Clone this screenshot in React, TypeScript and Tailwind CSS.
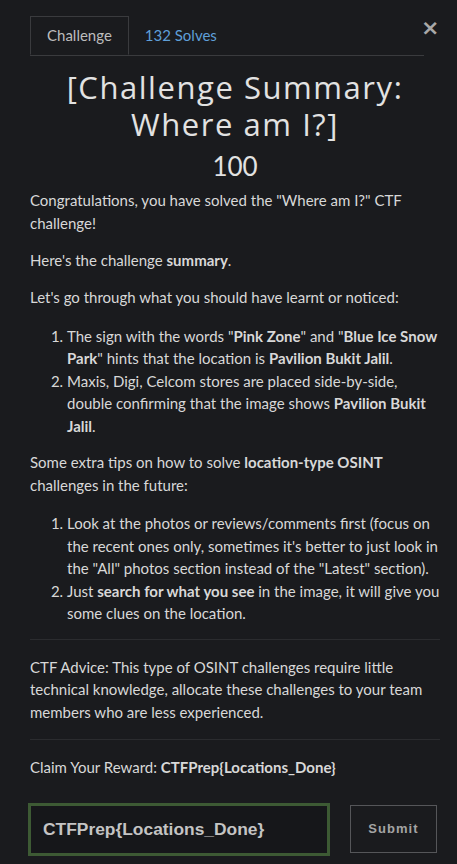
import { useState } from "react";

const body = { fontFamily: "Lato, 'Noto Sans', sans-serif" };

export default function App() {
    const [flag, setFlag] = useState("CTFPrep{Locations_Done}");

    return (
        <div className="relative w-[457px] h-[864px] overflow-hidden bg-[#1a1b1e] text-[#d8d8d8]" style={body}>
            {/* Close */}
            <button className="absolute left-[421px] top-[17px] text-[22px] leading-none font-bold text-[#a8a8a8]" style={{ fontFamily: "'DejaVu Sans', sans-serif" }}>
                ×
            </button>

            <div className="pl-[30px] pr-[17px] pt-[16px]">
                {/* Tabs */}
                <div className="flex w-[394px] border-b border-[#3a3b3e] text-[15px]">
                    <div className="-mb-px h-[39px] flex items-center px-4 border border-[#3a3b3e] border-b-[#1a1b1e] text-[#bdbdbd]">
                        Challenge
                    </div>
                    <div className="h-[39px] flex items-center px-4 text-[#5f9fd8]">132 Solves</div>
                </div>

                {/* Title */}
                <h2
                    className="mt-[13px] text-center text-[31px] leading-[37px] tracking-[0.05em] text-[#e2e2e2]"
                    style={{ fontFamily: "'Open Sans', sans-serif" }}
                >
                    [Challenge Summary:
                    <br />
                    Where am I?]
                </h2>
                <div className="mt-[6px] text-center text-[26px] leading-[34px] text-[#e2e2e2]">100</div>

                {/* Description */}
                <div className="mt-[6px] text-[15px] leading-[22.5px]">
                    <p className="mb-[14.5px]">Congratulations, you have solved the "Where am I?" CTF challenge!</p>
                    <p className="mb-[14.5px]">
                        Here's the challenge <b>summary</b>.
                    </p>
                    <p className="mb-[16.5px]">Let's go through what you should have learnt or noticed:</p>
                    <ol className="list-decimal pl-[37px] mb-[14px]">
                        <li>
                            The sign with the words "<b>Pink Zone</b>" and "<b>Blue Ice Snow Park</b>" hints that the location is{" "}
                            <b>Pavilion Bukit Jalil</b>.
                        </li>
                        <li>
                            Maxis, Digi, Celcom stores are placed side-by-side, double confirming that the image shows{" "}
                            <b>Pavilion Bukit Jalil</b>.
                        </li>
                    </ol>
                    <p className="mb-[16px]">
                        Some extra tips on how to solve <b>location-type OSINT</b> challenges in the future:
                    </p>
                    <ol className="list-decimal pl-[37px]">
                        <li>
                            Look at the photos or reviews/comments first (focus on the recent ones only, sometimes it's better to just
                            look in the "All" photos section instead of the "Latest" section).
                        </li>
                        <li>
                            Just <b>search for what you see</b> in the image, it will give you some clues on the location.
                        </li>
                    </ol>
                    <hr className="mt-[14px] mb-[16px] border-t border-[#2b2c2f]" />
                    <p>
                        CTF Advice: This type of OSINT challenges require little technical knowledge, allocate these challenges to your
                        team members who are less experienced.
                    </p>
                    <hr className="my-[16px] border-t border-[#2b2c2f]" />
                    <p>
                        Claim Your Reward: <b>CTFPrep{"{"}Locations_Done{"}"}</b>
                    </p>
                </div>

                {/* Submit row */}
                <div className="mt-[24px] flex items-center">
                    <input
                        value={flag}
                        onChange={(e) => setFlag(e.target.value)}
                        className="-ml-[2px] w-[302px] h-[53px] border-[3px] border-[#3d5a34] bg-[#16171a] px-3 text-[17.4px] font-bold text-[#c4c4c4] outline-none"
                        style={{ fontFamily: "'Liberation Sans', Arial, sans-serif" }}
                    />
                    <button
                        className="ml-[20px] w-[87px] h-[48px] border border-[#555659] text-[13px] font-bold tracking-[0.08em] text-[#a4a4a4]"
                        style={{ fontFamily: "'Liberation Sans', Arial, sans-serif" }}
                    >
                        Submit
                    </button>
                </div>
            </div>
        </div>
    );
}
